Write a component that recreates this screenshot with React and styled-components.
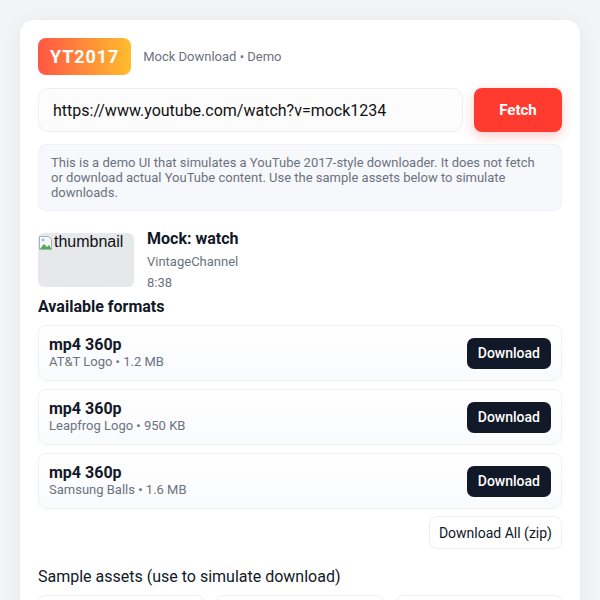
import React from 'react';
import styled, { createGlobalStyle } from 'styled-components';

const GlobalStyle = createGlobalStyle`
  html, body {
    margin: 0;
    padding: 0;
    background: #f3f4f6;
    font-family: Roboto, "Noto Sans", "Liberation Sans", sans-serif;
    color: #111827;
  }
  * { box-sizing: border-box; }
`;

const formats = [
  { name: 'mp4 360p', file: 'AT&T Logo', size: '1.2 MB' },
  { name: 'mp4 360p', file: 'Leapfrog Logo', size: '950 KB' },
  { name: 'mp4 360p', file: 'Samsung Balls', size: '1.6 MB' }
];

const samples = ['AT&T Logo', 'Leapfrog Logo', 'Samsung Balls'];

const Page = styled.div`
  padding: 20px;
  height: 600px;
  overflow: hidden;
`;

const Card = styled.div`
  background: #fff;
  border-radius: 14px;
  padding: 18px 18px 24px;
  box-shadow: 0 4px 24px rgba(15, 23, 42, 0.06);
  display: flex;
  flex-direction: column;
`;

const Header = styled.div`
  display: flex;
  align-items: center;
  gap: 12px;
`;

const Badge = styled.div`
  height: 37px;
  padding: 0 12px;
  border-radius: 8px;
  background: linear-gradient(90deg, #ff5745 0%, #ff8a3a 50%, #ffbd2e 100%);
  color: #fff;
  font-weight: 700;
  font-size: 18px;
  letter-spacing: 0.9px;
  display: flex;
  align-items: center;
`;

const Subtitle = styled.span`
  font-size: 13px;
  color: #6b7280;
`;

const SearchRow = styled.div`
  display: flex;
  gap: 11px;
  margin-top: 13px;
`;

const UrlInput = styled.div`
  flex: 1;
  height: 44px;
  border: 1px solid #eef0f3;
  border-radius: 10px;
  background: #fcfcfd;
  padding: 0 14px;
  display: flex;
  align-items: center;
  font-size: 16px;
  color: #111;
`;

const FetchButton = styled.button`
  width: 88px;
  height: 44px;
  border: none;
  border-radius: 8px;
  background: #ff3b30;
  color: #fff;
  font-family: inherit;
  font-weight: 700;
  font-size: 15px;
  box-shadow: 0 4px 12px rgba(255, 59, 48, 0.25);
`;

const Notice = styled.div`
  margin-top: 12px;
  background: #f7f8fb;
  border: 1px solid #eff1f5;
  border-radius: 8px;
  padding: 10px 12px 10px;
  font-size: 13px;
  line-height: 15px;
  color: #6b7280;
`;

const VideoRow = styled.div`
  display: flex;
  gap: 13px;
  margin-top: 18px;
`;

const Thumb = styled.div`
  width: 96px;
  height: 54px;
  margin-top: 4px;
  border-radius: 6px;
  background: #e6e8ec;
  display: flex;
  align-items: flex-start;
  font-family: "Liberation Sans", Arial, sans-serif;
  font-size: 16px;
  color: #111;
  line-height: 18px;
`;

const VideoInfo = styled.div`
  display: flex;
  flex-direction: column;
`;

const VideoTitle = styled.div`
  font-size: 16px;
  font-weight: 700;
  line-height: 20px;
`;

const Meta = styled.div`
  font-size: 13px;
  color: #6b7280;
  line-height: 21px;
  margin-top: ${p => p.first ? '2px' : '0'};
`;

const SectionTitle = styled.div`
  font-size: 16px;
  font-weight: ${p => p.bold ? 700 : 400};
  margin-top: ${p => p.top}px;
  line-height: 20px;
`;

const FormatList = styled.div`
  display: flex;
  flex-direction: column;
  gap: 8px;
  margin-top: 8px;
`;

const FormatRow = styled.div`
  height: 56px;
  border: 1px solid #f0f1f4;
  border-radius: 8px;
  background: linear-gradient(180deg, #ffffff 0%, #f9fafc 100%);
  padding: 0 10px 0 10px;
  display: flex;
  align-items: center;
  justify-content: space-between;
`;

const FormatName = styled.div`
  font-size: 16px;
  font-weight: 700;
  line-height: 18px;
`;

const FormatSub = styled.div`
  font-size: 13px;
  color: #6b7280;
  line-height: 16px;
`;

const DownloadButton = styled.button`
  height: 31px;
  padding: 0 11px;
  border: none;
  border-radius: 7px;
  background: #111827;
  color: #fff;
  font-family: inherit;
  font-size: 14px;
  font-weight: 500;
`;

const AllRow = styled.div`
  display: flex;
  justify-content: flex-end;
  margin-top: 7px;
`;

const GhostButton = styled.button`
  height: 33px;
  padding: 0 9px;
  border: 1px solid #eceef2;
  border-radius: 8px;
  background: #fff;
  color: #111827;
  font-family: inherit;
  font-size: 14px;
`;

const SampleGrid = styled.div`
  display: grid;
  grid-template-columns: repeat(3, 1fr);
  gap: 11px;
  margin-top: 8px;
`;

const SampleCard = styled.div`
  height: 80px;
  border: 1px solid #eceef2;
  border-radius: 8px;
  background: #fff;
`;

const BrokenIcon = () => (
  <svg width="16" height="16" viewBox="0 0 16 16" style={{ flexShrink: 0, marginTop: 2 }}>
    <path d="M1.5 1.5h9l3 3v10h-12z" fill="#f4f6f8" stroke="#a9b0b8" strokeWidth="1" />
    <path d="M2 14l4-5 3 3 2-2 2.5 4z" fill="#4caf50" />
    <circle cx="5" cy="5" r="1.3" fill="#7fb7e6" />
  </svg>
);

export default function App() {
  return (
    <Page>
      <GlobalStyle />
      <Card>
        <Header>
          <Badge>YT2017</Badge>
          <Subtitle>Mock Download • Demo</Subtitle>
        </Header>
        <SearchRow>
          <UrlInput>https://www.youtube.com/watch?v=mock1234</UrlInput>
          <FetchButton>Fetch</FetchButton>
        </SearchRow>
        <Notice>
          This is a demo UI that simulates a YouTube 2017-style downloader. It does not fetch or download
          actual YouTube content. Use the sample assets below to simulate downloads.
        </Notice>
        <VideoRow>
          <Thumb>
            <BrokenIcon />
            <span>thumbnail</span>
          </Thumb>
          <VideoInfo>
            <VideoTitle>Mock: watch</VideoTitle>
            <Meta first>VintageChannel</Meta>
            <Meta>8:38</Meta>
          </VideoInfo>
        </VideoRow>
        <SectionTitle bold top={4}>Available formats</SectionTitle>
        <FormatList>
          {formats.map((f, i) => (
            <FormatRow key={i}>
              <div>
                <FormatName>{f.name}</FormatName>
                <FormatSub>{f.file} • {f.size}</FormatSub>
              </div>
              <DownloadButton>Download</DownloadButton>
            </FormatRow>
          ))}
        </FormatList>
        <AllRow>
          <GhostButton>Download All (zip)</GhostButton>
        </AllRow>
        <SectionTitle top={18}>Sample assets (use to simulate download)</SectionTitle>
        <SampleGrid>
          {samples.map(s => <SampleCard key={s} />)}
        </SampleGrid>
      </Card>
    </Page>
  );
}
